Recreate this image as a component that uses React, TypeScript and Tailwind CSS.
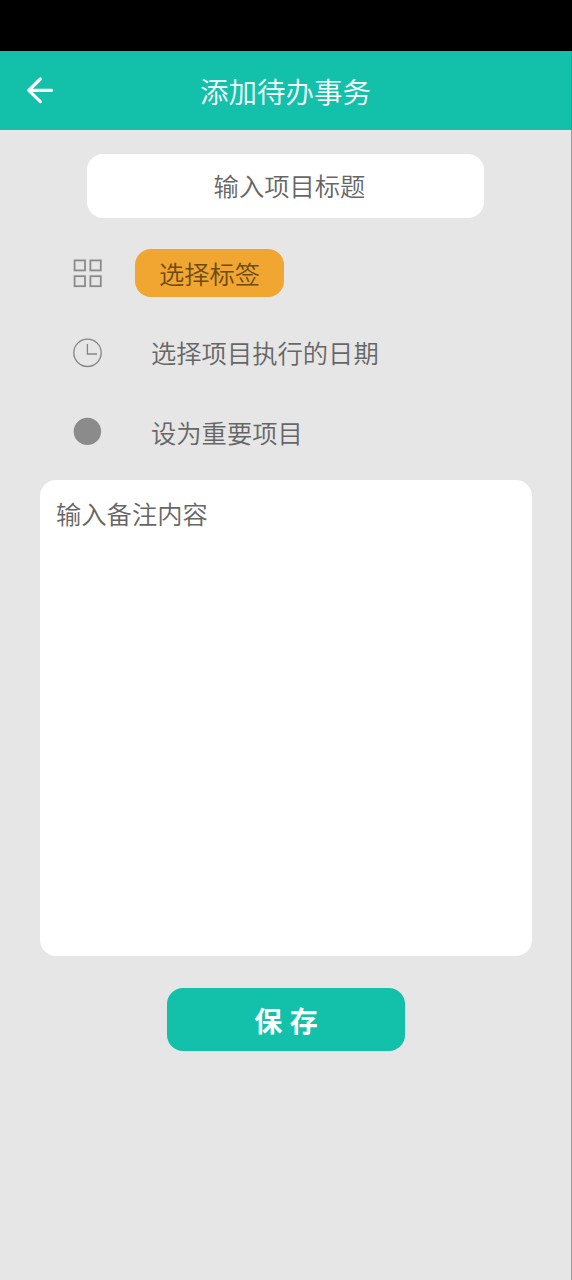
import type { ReactNode } from "react";

type OptionRow_Props = {
  icon: ReactNode;
  children: ReactNode;
};

const GridIcon = () => (
  <svg width="30" height="30" viewBox="0 0 30 30" fill="none" stroke="#8a8a8a" strokeWidth="1.8">
    <rect x="1.6" y="2.4" width="10.4" height="10" />
    <rect x="17.4" y="2.4" width="10.4" height="10" />
    <rect x="1.6" y="18.2" width="10.4" height="10" />
    <rect x="17.4" y="18.2" width="10.4" height="10" />
  </svg>
);

const ClockIcon = () => (
  <svg width="30" height="30" viewBox="0 0 30 30" fill="none" stroke="#858585" strokeWidth="1.3">
    <circle cx="14.5" cy="14.8" r="13.7" />
    <path d="M14.4 6V16H24" />
  </svg>
);

const DotIcon = () => (
  <svg width="30" height="30" viewBox="0 0 30 30">
    <circle cx="14.4" cy="14.4" r="13.7" fill="#8b8b8b" />
  </svg>
);

const OptionRow = ({ icon, children }: OptionRow_Props) => {
  return (
    <div className="flex h-12 items-center">
      <div className="mr-8 w-[30px]">{icon}</div>
      {children}
    </div>
  );
};

const App = () => {
  return (
    <div className="flex h-[1280px] w-[572px] flex-col bg-[#e6e6e6] font-['Noto_Sans_CJK_SC',sans-serif] text-[25.3px] font-[350] text-[#666]">
      <div className="h-[51px] shrink-0 bg-black" />
      <header className="flex h-[79px] shrink-0 items-center border-r border-[#24a392] bg-[#13c1aa] pr-[26px] pl-[26px]">
        <button className="mb-px w-7">
          <svg width="28" height="28" viewBox="0 0 28 28" fill="none" stroke="#fff" strokeWidth="3.2" strokeLinecap="round">
            <path d="M14.3 3L2.8 14.3L14.3 25.6M3 14.3H25.5" strokeLinejoin="round" />
          </svg>
        </button>
        <h1 className="mt-0.5 mr-7 grow text-center text-[28.5px] leading-none text-white">添加待办事务</h1>
      </header>

      <main className="flex grow flex-col border-r border-[#9b9b9b]">
        <div className="mt-6 ml-[87px] flex h-16 w-[397px] items-center justify-center rounded-2xl bg-white pl-[8px]">
          输入项目标题
        </div>

        <div className="mt-[31px] ml-[73px] flex flex-col gap-[31.5px]">
          <OptionRow icon={<GridIcon />}>
            <button className="h-12 w-[149px] rounded-2xl bg-[#f0a630] pt-0.5 text-[#6d4b15]">选择标签</button>
          </OptionRow>
          <OptionRow icon={<ClockIcon />}>
            <span className="ml-4">选择项目执行的日期</span>
          </OptionRow>
          <OptionRow icon={<DotIcon />}>
            <span className="mt-px ml-4">设为重要项目</span>
          </OptionRow>
        </div>

        <div className="mt-[23.5px] ml-10 h-[476.5px] w-[492px] rounded-2xl bg-white px-4 pt-[15px] leading-9">
          输入备注内容
        </div>

        <button className="mt-8 ml-[167px] h-[63px] w-[238px] rounded-2xl bg-[#13c1aa] text-[28px] font-bold text-white">
          保&nbsp;<span className="ml-px">存</span>
        </button>
      </main>
    </div>
  );
};

export default App;
